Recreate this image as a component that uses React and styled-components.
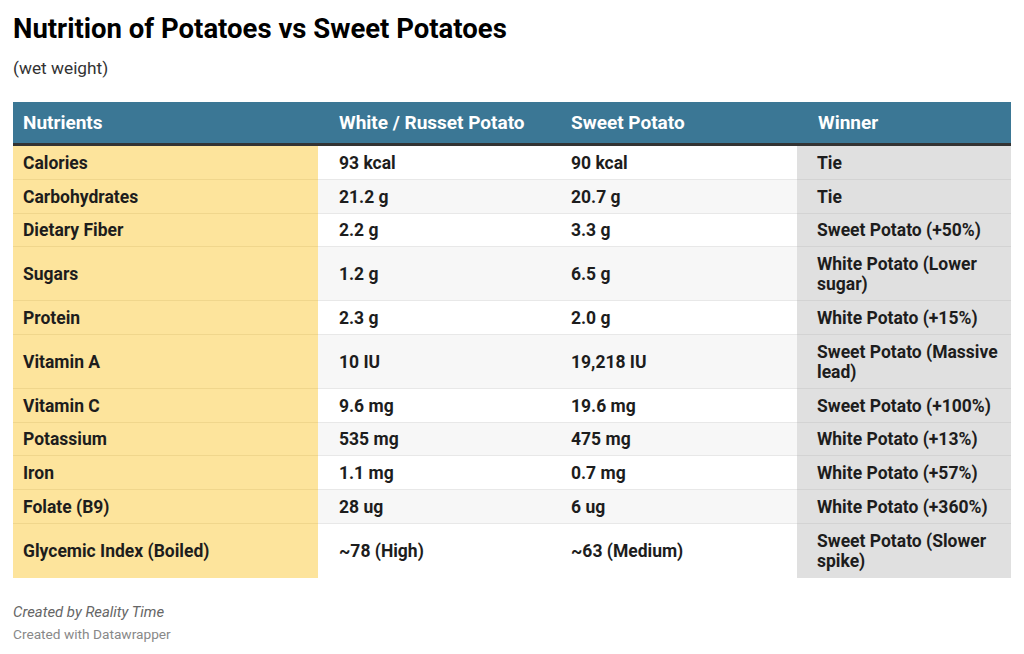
import React from "react";
import styled, { createGlobalStyle } from "styled-components";

const Global = createGlobalStyle`
  html, body { margin: 0; padding: 0; background: #fff; }
  body { font-family: Roboto, "Noto Sans", sans-serif; color: #1d1d1d; }
`;

const Page = styled.div`
  padding: 13px 13px 0 13px;
  width: 998px;
`;

const Title = styled.h1`
  margin: 0;
  font-size: 27.5px;
  line-height: 32px;
  font-weight: 700;
  color: #000;
`;

const Subtitle = styled.p`
  margin: 13px 0 0 0;
  font-size: 17.3px;
  line-height: 20px;
  color: #333;
`;

const Table = styled.div`
  margin-top: 24px;
  display: grid;
  grid-template-columns: 305px 232px 247px 214px;
`;

const HeadCell = styled.div`
  background: #3b7795;
  color: #fff;
  font-weight: 700;
  font-size: 19px;
  line-height: 22px;
  padding: 10px 8px 9px ${(p) => (p.$first ? "10px" : "21px")};
  border-bottom: 3px solid #333;
  white-space: nowrap;
`;

const Cell = styled.div`
  display: flex;
  align-items: center;
  font-size: 17.5px;
  line-height: 20px;
  font-weight: 700;
  color: #1d1d1d;
  padding: 6.8px 8px 6px ${(p) => (p.$kind === "name" ? "10px" : p.$kind === "win" ? "20px" : "21px")};
  background: ${(p) =>
    p.$kind === "name" ? "#fde49c" : p.$kind === "win" ? "#e0e0e0" : p.$alt ? "#f7f7f7" : "#fff"};
  border-bottom: 1px solid
    ${(p) => (p.$last ? "transparent" : p.$kind === "name" ? "#f0d68c" : p.$kind === "win" ? "#d3d3d3" : "#e8e8e8")};
`;

const Footer = styled.div`
  margin-top: 25px;
  display: flex;
  flex-direction: column;
  gap: 5px;
`;

const Byline = styled.span`
  font-size: 14.9px;
  line-height: 18px;
  font-style: italic;
  color: #666;
`;

const Credit = styled.span`
  font-size: 13.7px;
  line-height: 16px;
  color: #888;
`;

const rows = [
  ["Calories", "93 kcal", "90 kcal", "Tie"],
  ["Carbohydrates", "21.2 g", "20.7 g", "Tie"],
  ["Dietary Fiber", "2.2 g", "3.3 g", "Sweet Potato (+50%)"],
  ["Sugars", "1.2 g", "6.5 g", "White Potato (Lower sugar)"],
  ["Protein", "2.3 g", "2.0 g", "White Potato (+15%)"],
  ["Vitamin A", "10 IU", "19,218 IU", "Sweet Potato (Massive lead)"],
  ["Vitamin C", "9.6 mg", "19.6 mg", "Sweet Potato (+100%)"],
  ["Potassium", "535 mg", "475 mg", "White Potato (+13%)"],
  ["Iron", "1.1 mg", "0.7 mg", "White Potato (+57%)"],
  ["Folate (B9)", "28 ug", "6 ug", "White Potato (+360%)"],
  ["Glycemic Index (Boiled)", "~78 (High)", "~63 (Medium)", "Sweet Potato (Slower spike)"],
];

export default function App() {
  return (
    <>
      <Global />
      <Page>
        <Title>Nutrition of Potatoes vs Sweet Potatoes</Title>
        <Subtitle>(wet weight)</Subtitle>
        <Table>
          <HeadCell $first>Nutrients</HeadCell>
          <HeadCell>White / Russet Potato</HeadCell>
          <HeadCell>Sweet Potato</HeadCell>
          <HeadCell>Winner</HeadCell>
          {rows.map((r, i) => {
            const alt = i % 2 === 1;
            const last = i === rows.length - 1;
            return (
              <React.Fragment key={r[0]}>
                <Cell $kind="name" $last={last}>{r[0]}</Cell>
                <Cell $alt={alt} $last={last}>{r[1]}</Cell>
                <Cell $alt={alt} $last={last}>{r[2]}</Cell>
                <Cell $kind="win" $last={last}>{r[3]}</Cell>
              </React.Fragment>
            );
          })}
        </Table>
        <Footer>
          <Byline>Created by Reality Time</Byline>
          <Credit>Created with Datawrapper</Credit>
        </Footer>
      </Page>
    </>
  );
}
